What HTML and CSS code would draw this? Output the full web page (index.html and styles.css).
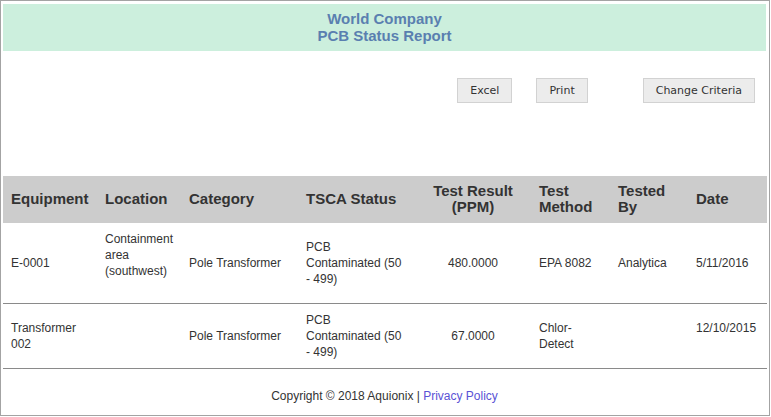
FILE: index.html
```html
<!DOCTYPE html>
<html>
<head>
<meta charset="utf-8">
<link rel="stylesheet" href="styles.css">
</head>
<body>
<div class="frame">
  <div class="banner">
    <div>World Company</div>
    <div>PCB Status Report</div>
  </div>
  <div class="toolbar">
    <button class="btn">Excel</button>
    <button class="btn btn-print">Print</button>
    <button class="btn btn-criteria">Change Criteria</button>
  </div>
  <table class="report">
    <colgroup>
      <col class="c1"><col class="c2"><col class="c3"><col class="c4">
      <col class="c5"><col class="c6"><col class="c7"><col class="c8">
    </colgroup>
    <thead>
      <tr>
        <th>Equipment</th>
        <th>Location</th>
        <th>Category</th>
        <th>TSCA Status</th>
        <th class="center">Test Result (PPM)</th>
        <th>Test Method</th>
        <th>Tested By</th>
        <th>Date</th>
      </tr>
    </thead>
    <tbody>
      <tr>
        <td>E-0001</td>
        <td>Containment area (southwest)<br>&nbsp;</td>
        <td>Pole Transformer</td>
        <td>PCB Contaminated (50 - 499)</td>
        <td class="center">480.0000</td>
        <td>EPA 8082</td>
        <td>Analytica</td>
        <td>5/11/2016</td>
      </tr>
      <tr>
        <td>Transformer 002</td>
        <td></td>
        <td>Pole Transformer</td>
        <td>PCB Contaminated (50 - 499)</td>
        <td class="center">67.0000</td>
        <td>Chlor-Detect</td>
        <td></td>
        <td>12/10/2015<br>&nbsp;</td>
      </tr>
    </tbody>
  </table>
  <div class="footer">Copyright © 2018 Aquionix | <a href="#" class="link">Privacy Policy</a></div>
</div>
</body>
</html>
```

FILE: styles.css
```css
html, body {
  margin: 0;
  padding: 0;
  background: #fff;
}
.frame {
  box-sizing: border-box;
  width: 770px;
  height: 416px;
  border: 1px solid #a3a3a3;
  padding: 3px 3px 0 2px;
  font-family: "Liberation Sans", Arial, sans-serif;
  color: #333;
}
.banner {
  background: #ccefdd;
  color: #5a7fb0;
  font-weight: bold;
  font-size: 15px;
  line-height: 17px;
  text-align: center;
  padding: 6px 0 7px;
}
.toolbar {
  display: flex;
  justify-content: flex-end;
  margin-top: 27px;
  padding-right: 11px;
  height: 25px;
}
.btn {
  box-sizing: border-box;
  height: 25px;
  padding: 0 12px;
  background: #ececec;
  border: 1px solid #d2d2d2;
  border-radius: 0;
  font-family: "DejaVu Sans", Verdana, sans-serif;
  font-size: 11px;
  color: #333;
}
.btn-print {
  margin-left: 24px;
}
.btn-criteria {
  margin-left: 55px;
}
.report {
  margin-top: 73px;
  width: 764px;
  border-collapse: collapse;
  table-layout: fixed;
}
.c1 { width: 94px; }
.c2 { width: 84px; }
.c3 { width: 117px; }
.c4 { width: 115px; }
.c5 { width: 118px; }
.c6 { width: 79px; }
.c7 { width: 78px; }
.c8 { width: 79px; }
.report th {
  background: #cccccc;
  font-size: 15px;
  font-weight: bold;
  line-height: 16px;
  text-align: left;
  padding: 7px 6px 8px 8px;
  height: 32px;
  color: #333;
}
.report td {
  font-size: 12px;
  line-height: 16px;
  padding: 8px 6px 8px 8px;
  border-bottom: 1px solid #8a8a8a;
  vertical-align: middle;
}
.report .center {
  text-align: center;
}
.footer {
  margin-top: 19px;
  text-align: center;
  font-size: 12px;
  line-height: 16px;
}
.link {
  color: #5a52d5;
  text-decoration: none;
}
```
